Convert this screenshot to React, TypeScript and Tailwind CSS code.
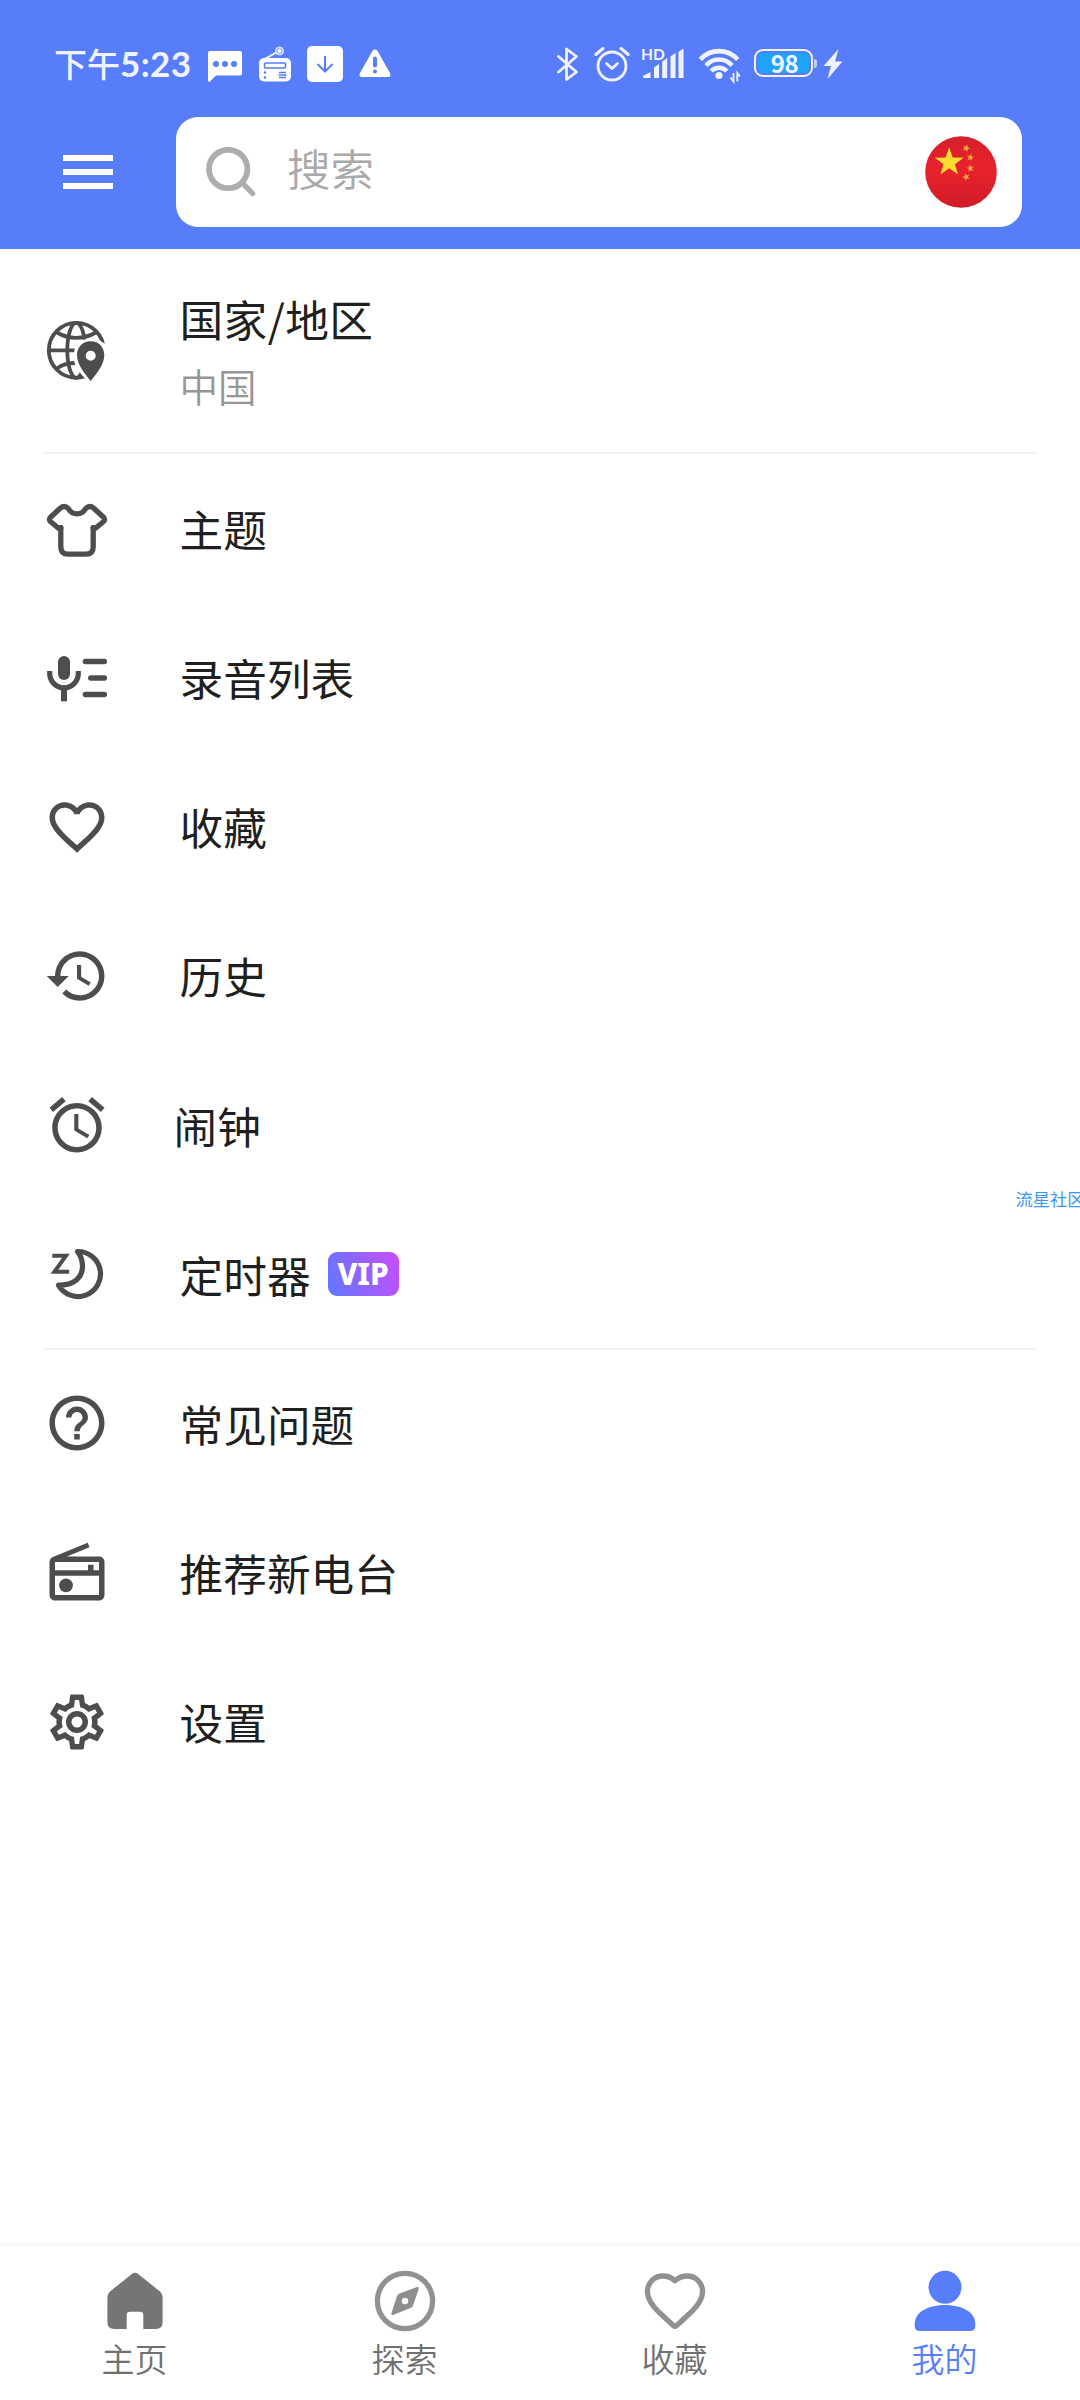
import type { ReactNode } from "react";
import { MdAlarm, MdFavoriteBorder, MdHelpOutline, MdHistory } from "react-icons/md";

const star = (cx: number, cy: number, r: number, turn = 0) =>
  Array.from({ length: 10 }, (_, i) => {
    const a = ((i * 36 - 90 + turn) * Math.PI) / 180;
    const d = i % 2 ? r * 0.4 : r;
    return `${(cx + d * Math.cos(a)).toFixed(2)},${(cy + d * Math.sin(a)).toFixed(2)}`;
  }).join(" ");

function StatusBar() {
  return (
    <div className="flex h-[117px] items-start pt-[46px] pl-[54px] text-[#f0f3ff]">
      <div className="-mt-[1px] h-9 w-[154px] whitespace-nowrap font-[Lato,'Noto_Sans_CJK_SC',sans-serif] text-[34px] leading-9 font-medium">
        <span className="font-['Noto_Sans_CJK_SC',sans-serif] text-[33px]">下午</span>
        <span className="text-[35px] font-bold tracking-[0.4px]">5:23</span>
      </div>
      <svg className="h-9 w-[34px] shrink-0" viewBox="0 0 34 36">
        <path fill="#fff" d="M2 5H32Q34 5 34 7V27.500Q34 29.500 32 29.500H8L1.500 36Q0 36 0 34V7Q0 5 2 5Z" />
        <g fill="#587dfb"><circle cx="8" cy="18" r="3" /><circle cx="17" cy="18" r="3" /><circle cx="26" cy="18" r="3" /></g>
      </svg>
      <svg className="ml-[17px] h-9 w-8 shrink-0" viewBox="0 0 32 36">
        <path d="M4 14L20 5" stroke="#fff" strokeWidth="2" />
        <circle cx="20.500" cy="5" r="4" fill="#a9bcff" stroke="#e8edff" strokeWidth="1" />
        <circle cx="20.500" cy="5" r="1.800" fill="#fff" />
        <rect y="12" width="32" height="23.500" rx="5" fill="#fff" />
        <rect x="5.500" y="17" width="21" height="5" rx="1" fill="none" stroke="#587dfb" strokeWidth="1.600" />
        <g fill="#587dfb">
          <circle cx="6" cy="26.500" r="1.300" /><circle cx="6" cy="31.500" r="1.300" />
        </g>
        <path d="M20 26.500h7M19.500 29h8M20 31.500h7" stroke="#587dfb" strokeWidth="1.300" />
      </svg>
      <svg className="ml-4 h-9 w-9 shrink-0" viewBox="0 0 36 36">
        <rect width="36" height="36" rx="5" fill="#fff" />
        <path d="M18 10v15M10.500 18l7.500 7.500L25.500 18" fill="none" stroke="#587dfb" strokeWidth="2" />
      </svg>
      <svg className="ml-4 h-9 w-8 shrink-0" viewBox="0 0 32 36">
        <path fill="#fff" d="M13.600 4.800Q16 2 18.400 4.800L31 27Q32.500 31 28.500 31H3.500Q-.5 31 1 27Z" />
        <path d="M16 12.500v7" stroke="#587dfb" strokeWidth="4" strokeLinecap="round" />
        <circle cx="16" cy="25.500" r="2" fill="#587dfb" />
      </svg>
      <svg className="ml-[166px] h-9 w-[22px] shrink-0" viewBox="0 0 22 36">
        <path d="M1.500 10.500L19.500 26L9.500 33.500V3L19.500 10.500L1.500 26" fill="none" stroke="currentColor" strokeWidth="2.800" strokeLinejoin="round" strokeLinecap="round" />
      </svg>
      <svg className="ml-[15px] h-9 w-9 shrink-0" viewBox="0 0 36 36" fill="none" stroke="currentColor" strokeWidth="2.800" strokeLinecap="round">
        <circle cx="18" cy="20" r="14" />
        <path d="M1.800 8.500L9 2.500M34.200 8.500L27 2.500" strokeWidth="3" />
        <path d="M12.500 17.500L18 22.500L23.500 17.500" strokeLinejoin="round" />
      </svg>
      <div className="relative ml-[11px] h-9 w-[43px] shrink-0">
        <svg className="h-9 w-[43px]" viewBox="0 0 43 36">
          <path fill="currentColor" d="M2 32V30L9.500 26V32ZM13 32V21.500L18 18V32ZM21.200 32V15.500L26.200 12V32ZM29.500 32V10.500L34.500 7V32ZM37.500 32V6L42.500 2.500V32Z" />
        </svg>
        <span className="absolute -top-[0.500px] left-0 font-[Lato,sans-serif] text-[15.500px] leading-4 font-bold">HD</span>
      </div>
      <svg className="ml-[14px] h-[38px] w-[44px] shrink-0" viewBox="0 -2 44 38" fill="none" stroke="currentColor">
        <path strokeWidth="4.600" d="M2.300 11.500A25 25 0 0 1 39.700 11.500" />
        <path strokeWidth="4.600" d="M8 17.600A17 17 0 0 1 34 17.600" />
        <path strokeWidth="4.600" d="M13.200 23A11 11 0 0 1 28.800 23" />
        <circle cx="21" cy="27.500" r="3.600" fill="currentColor" stroke="none" />
        <path strokeWidth="1.800" d="M35.500 25V33.500L32.500 29.500M39.300 33.500V25L42 28.500" />
      </svg>
      <div className="mt-[3px] ml-[12px] flex shrink-0 items-center">
        <div className="h-[28px] w-[59px] rounded-[9px] border-[2.500px] border-[#f0f3ff] p-[2px]">
          <div className="flex h-full items-center justify-center rounded-[5px] bg-[#1fa4fa] pb-[1px] pl-[2px] font-['Noto_Sans_CJK_SC',sans-serif] text-[24px] leading-[20px] font-bold tracking-[-0.5px]">98</div>
        </div>
        <div className="ml-[1px] h-[9px] w-[3px] rounded-r bg-[#c3d0ff]" />
      </div>
      <svg className="ml-[6px] h-9 w-5 shrink-0" viewBox="0 0 20 36">
        <path fill="currentColor" d="M15.500 3L.5 20H8L4.500 33L19.500 15.500H12Z" />
      </svg>
    </div>
  );
}

function ChinaFlag() {
  return (
    <svg className="mr-[25px] size-[72px]" viewBox="0 0 72 72">
      <defs>
        <linearGradient id="flag" x1="0" y1="0" x2="0" y2="1">
          <stop offset="0" stopColor="#d5202d" />
          <stop offset=".45" stopColor="#e8222c" />
          <stop offset="1" stopColor="#d01c28" />
        </linearGradient>
      </defs>
      <circle cx="36" cy="36" r="35.800" fill="url(#flag)" />
      <polygon points={star(24.200, 26.300, 15)} fill="#fddc30" />
      <g fill="#f0a83c">
        <polygon points={star(41.200, 12.200, 4, 20)} />
        <polygon points={star(45.400, 21.500, 4, 10)} />
        <polygon points={star(45.400, 32.300, 4, -10)} />
        <polygon points={star(41.200, 41, 4, -20)} />
      </g>
    </svg>
  );
}

function Header() {
  return (
    <header className="h-[249px] bg-[#587dfb]">
      <StatusBar />
      <div className="flex h-[110px] items-center pr-[58px] pl-[63px]">
        <div className="flex w-[50px] flex-col gap-2">
          <div className="h-1.5 bg-white" />
          <div className="h-1.5 bg-white" />
          <div className="h-1.5 bg-white" />
        </div>
        <div className="ml-[63px] flex h-[110px] flex-1 items-center rounded-[22px] bg-white">
          <svg className="ml-[30px] size-[50px]" viewBox="0 0 50 50" fill="none" stroke="#adadad">
            <circle cx="22.200" cy="22" r="19.200" strokeWidth="5.800" />
            <path d="M36.500 36L46.500 46.500" strokeWidth="5.400" strokeLinecap="round" />
          </svg>
          <span className="-mt-[9px] ml-[31px] flex-1 text-[43.500px] leading-[64px] font-[350] text-[#a9a9a9]">搜索</span>
          <ChinaFlag />
        </div>
      </div>
    </header>
  );
}

const svgBox = "size-[66px]";

const GlobePin = (
  <svg className={svgBox} viewBox="0 0 66 66">
    <g fill="none" stroke="currentColor" strokeWidth="3.800">
      <circle cx="32.300" cy="32.300" r="27.500" />
      <ellipse cx="32.300" cy="32.300" rx="9" ry="27.500" />
      <path d="M4 32.300H40M13 14.500Q22 19.800 32.300 19.800T52 14.500M13 50.500Q20 45 32 45" />
    </g>
    <path fill="#fff" d="M32 50Q29.500 43 29.800 36Q31 21 46.700 20.500Q54 20.500 58 24L61 25.500H66V66H46L38 57Z" />
    <path fill="currentColor" fillRule="evenodd" d="M46.700 23.300C38.500 23.300 33 29.500 33 37.200C33 47 41 55.500 46.700 63C52.400 55.500 60.300 47 60.300 37.200C60.300 29.500 54.900 23.300 46.700 23.300ZM46.700 32.700A5 5 0 1 1 46.700 42.700A5 5 0 1 1 46.700 32.700Z" />
  </svg>
);

const Shirt = (
  <svg className={svgBox} viewBox="0 -1.200 66 66" fill="none" stroke="currentColor" strokeWidth="5.300" strokeLinejoin="round" strokeLinecap="round">
    <path d="M16.800 30.500V49.500Q16.800 57 24 57H42Q49.200 57 49.200 49.500V30.500" />
    <path d="M16.800 30.500L14.500 31L6.700 24.600Q4.300 22.500 6.500 20L16.200 11Q20.500 7.500 24.300 11.500Q27.500 16.700 33 16.700T41.700 11.500Q45.500 7.500 49.800 11L59.500 20Q61.700 22.500 59.300 24.600L51.500 31L49.200 30.500" />
  </svg>
);

const MicList = (
  <svg className={svgBox} viewBox="0 0 66 66" fill="none" stroke="currentColor">
    <rect x="14" y="11" width="12" height="24" rx="6" fill="currentColor" stroke="none" />
    <path d="M5.700 26V28.500A14.300 14.300 0 0 0 34.300 28.500V26" strokeWidth="5.200" />
    <path d="M20 43V56.300" strokeWidth="6" />
    <path d="M41.300 16.500H60.400M46.700 33H60.400M41.300 49.500H60.400" strokeWidth="5.300" strokeLinecap="round" />
  </svg>
);

const MoonZ = (
  <svg className={svgBox} viewBox="0 -0.700 66 66" fill="none" stroke="currentColor">
    <path d="M33.500 9.800A22.500 22.500 0 1 1 14.500 43.500C30 43.500 38.800 36 38.500 24C38.300 18 36.500 13.500 33.500 9.800Z" strokeWidth="5.200" strokeLinejoin="round" />
    <path d="M8.300 14H22L10.500 30H25.200" strokeWidth="4" />
  </svg>
);

const Radio = (
  <svg className={svgBox} viewBox="0 0 24 24" fill="currentColor">
    <path d="M20 6H8.300l8.260-3.340L15.880 1 3.240 6.150C2.510 6.430 2 7.170 2 8v12c0 1.100.89 2 2 2h16c1.110 0 2-.9 2-2V8c0-1.110-.89-2-2-2zm0 2v3h-2V9h-2v2H4V8h16zM4 20v-7h16v7H4z" />
    <circle cx="8" cy="16.480" r="2.500" />
  </svg>
);

const Cog = (
  <svg className={svgBox} viewBox="0 0 24 24" fill="currentColor">
    <path d="M12,8A4,4 0 0,1 16,12A4,4 0 0,1 12,16A4,4 0 0,1 8,12A4,4 0 0,1 12,8M12,10A2,2 0 0,0 10,12A2,2 0 0,0 12,14A2,2 0 0,0 14,12A2,2 0 0,0 12,10M10,22C9.750,22 9.540,21.820 9.500,21.580L9.130,18.930C8.500,18.680 7.960,18.340 7.440,17.940L4.950,18.950C4.730,19.030 4.460,18.950 4.340,18.730L2.340,15.270C2.210,15.050 2.270,14.780 2.460,14.630L4.570,12.970L4.500,12L4.570,11L2.460,9.370C2.270,9.220 2.210,8.950 2.340,8.730L4.340,5.270C4.460,5.050 4.730,4.960 4.950,5.050L7.440,6.050C7.960,5.660 8.500,5.320 9.130,5.070L9.500,2.420C9.540,2.180 9.750,2 10,2H14C14.250,2 14.460,2.180 14.500,2.420L14.870,5.070C15.500,5.320 16.040,5.660 16.560,6.050L19.050,5.050C19.270,4.960 19.540,5.050 19.660,5.270L21.660,8.730C21.790,8.950 21.730,9.220 21.540,9.370L19.430,11L19.500,12L19.430,13L21.540,14.630C21.730,14.780 21.790,15.050 21.660,15.270L19.660,18.730C19.540,18.950 19.270,19.040 19.050,18.950L16.560,17.950C16.040,18.340 15.500,18.680 14.870,18.930L14.500,21.580C14.460,21.820 14.250,22 14,22H10M11.250,4L10.880,6.610C9.680,6.860 8.620,7.500 7.850,8.390L5.440,7.350L4.690,8.650L6.800,10.200C6.400,11.370 6.400,12.640 6.800,13.800L4.680,15.360L5.430,16.660L7.860,15.620C8.630,16.500 9.680,17.140 10.870,17.380L11.240,20H12.760L13.130,17.390C14.320,17.140 15.370,16.500 16.140,15.620L18.570,16.660L19.320,15.360L17.200,13.810C17.600,12.640 17.600,11.370 17.200,10.200L19.310,8.650L18.560,7.350L16.150,8.390C15.380,7.500 14.320,6.860 13.120,6.620L12.750,4H11.250Z" />
  </svg>
);

type RowProps = { icon: ReactNode; label: string; vip?: boolean; narrow?: boolean };

function Row({ icon, label, vip, narrow }: RowProps) {
  return (
    <div className="flex h-[149.150px] items-center pl-[44px] text-[#4d4d4d]">
      {icon}
      <span className={`${narrow ? "ml-[63.500px]" : "ml-[69.500px]"} pb-[1px] text-[43.700px] leading-[64px] font-normal text-[#1f1f1f]`}>{label}</span>
      {vip && (
        <span className="ml-[17px] flex h-[44px] w-[71px] items-center justify-center rounded-[9px] bg-linear-[70deg] from-[#5f78ff] to-[#c94dff] font-['Noto_Sans',sans-serif] text-[30px] leading-[44px] font-extrabold text-white">
          VIP
        </span>
      )}
    </div>
  );
}

const mainRows: RowProps[] = [
  { icon: Shirt, label: "主题" },
  { icon: MicList, label: "录音列表" },
  { icon: <MdFavoriteBorder className={svgBox} />, label: "收藏" },
  { icon: <MdHistory className={svgBox} />, label: "历史" },
  { icon: <MdAlarm className={svgBox} />, label: "闹钟", narrow: true },
  { icon: MoonZ, label: "定时器", vip: true },
];

const moreRows: RowProps[] = [
  { icon: <MdHelpOutline className={svgBox} />, label: "常见问题" },
  { icon: Radio, label: "推荐新电台" },
  { icon: Cog, label: "设置" },
];

function NavItem({ label, active, children }: { label: string; active?: boolean; children: ReactNode }) {
  return (
    <div className={`flex flex-1 flex-col items-center pt-[24px] ${active ? "text-[#587dfb]" : "text-[#707070]"}`}>
      <svg className="size-[62px]" viewBox="0 0 62 62">{children}</svg>
      <span className="mt-[2px] mr-[1px] text-[33px] leading-[48px] font-[350]">{label}</span>
    </div>
  );
}

export default function App() {
  return (
    <div className="relative flex h-[2400px] w-[1080px] flex-col overflow-hidden bg-white font-['Noto_Sans_CJK_SC',sans-serif]">
      <Header />
      <main className="flex-1">
        <div className="flex h-[203px] items-center pl-[44px] text-[#4d4d4d]">
          {GlobePin}
          <div className="ml-[69.500px] flex flex-col pb-[1px]">
            <span className="text-[43.700px] leading-[64px] font-normal tracking-[0.4px] text-[#1f1f1f]">国家/地区</span>
            <span className="mt-[5px] text-[38.500px] leading-[60px] font-[350] text-[#969696]">中国</span>
          </div>
        </div>
        <hr className="mx-[44px] h-[2px] border-0 bg-[#f1f1f1]" />
        {mainRows.map((r) => <Row key={r.label} {...r} />)}
        <hr className="mx-[44px] -mt-[1px] -mb-[1px] h-[2px] border-0 bg-[#f3f3f3]" />
        {moreRows.map((r) => <Row key={r.label} {...r} />)}
      </main>
      <nav className="flex h-[157px] border-t-[3px] border-[#f8f8f8]">
        <NavItem label="主页">
          <path fill="#757575" d="M27.500 4.200Q31 1.300 34.500 4.200L56 21.500Q58.600 24 58.600 27V52.500Q58.600 59 52 59H39.300V45Q39.300 41.700 36 41.700H26Q22.700 41.700 22.700 45V59H10Q3.400 59 3.400 52.500V27Q3.400 24 6 21.500Z" />
        </NavItem>
        <NavItem label="探索">
          <circle cx="31" cy="31" r="27.600" fill="none" stroke="#919191" strokeWidth="5.300" />
          <path fill="#8e8e8e" fillRule="evenodd" d="M43 17Q45.400 16.500 44.700 19L39 35.500Q38.500 37.300 36.500 38L19 45Q16.800 45.500 17.500 43L23 26Q23.500 24.500 25.500 23.500ZM31 27.800A3.200 3.200 0 1 0 31 34.200A3.200 3.200 0 1 0 31 27.800Z" />
        </NavItem>
        <NavItem label="收藏">
          <path fill="none" stroke="#919191" strokeWidth="5.300" strokeLinejoin="round" d="M31 10.800Q25.500 6 19 6C10 6 3.400 13 3.400 21.500C3.400 30 9 36.500 15 42.300L29.300 55.500Q31 57 32.700 55.500L47 42.300C53 36.500 58.600 30 58.600 21.500C58.600 13 52 6 43 6Q36.500 6 31 10.800Z" />
        </NavItem>
        <NavItem label="我的" active>
          <circle cx="31" cy="17.300" r="16.500" fill="currentColor" />
          <path fill="currentColor" d="M.7 54C.7 41 16 35 31 35S61.300 41 61.300 54V56Q61.300 61 56 61H6Q.7 61 .7 56Z" />
        </NavItem>
      </nav>
      <span className="absolute top-[1187px] left-[1015.500px] text-[17.300px] leading-6 font-normal whitespace-nowrap text-[#3a97f5]">流星社区</span>
    </div>
  );
}
